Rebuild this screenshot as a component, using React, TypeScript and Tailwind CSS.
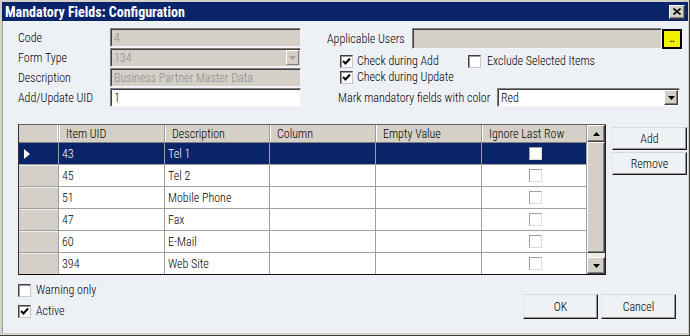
type Cell = { uid: string; desc: string };

const rows: Cell[] = [
  { uid: "43", desc: "Tel 1" },
  { uid: "45", desc: "Tel 2" },
  { uid: "51", desc: "Mobile Phone" },
  { uid: "47", desc: "Fax" },
  { uid: "60", desc: "E-Mail" },
  { uid: "394", desc: "Web Site" },
];

const headers = ["Item UID", "Description", "Column", "Empty Value", "Ignore Last Row"];

function CheckMark() {
  return (
    <svg width="9" height="9" viewBox="0 0 9 9" className="block">
      <path d="M1 4 L3.5 6.5 L8 1.5" fill="none" stroke="#000" strokeWidth="2" />
    </svg>
  );
}

function CheckBox({ checked = false }: { checked?: boolean }) {
  return (
    <span className="flex h-[13px] w-[13px] shrink-0 items-center justify-center border border-t-[#404040] border-l-[#404040] border-b-[#c8c8c8] border-r-[#c8c8c8] bg-white shadow-[inset_1px_1px_0_#9a9a9a]">
      {checked && <CheckMark />}
    </span>
  );
}

function GridCheck() {
  return (
    <span className="block h-[13px] w-[13px] border border-t-[#a0a0a0] border-l-[#a0a0a0] border-b-[#dcdcdc] border-r-[#dcdcdc] bg-white" />
  );
}

function DownArrow({ color = "#000" }: { color?: string }) {
  return (
    <svg width="7" height="4" viewBox="0 0 7 4" className="block">
      <path d="M0 0 H7 L3.5 4 Z" fill={color} />
    </svg>
  );
}

function UpArrow() {
  return (
    <svg width="7" height="4" viewBox="0 0 7 4" className="block">
      <path d="M0 4 H7 L3.5 0 Z" fill="#000" />
    </svg>
  );
}

function ClassicButton({ label, h = "h-[24px]" }: { label: string; h?: string }) {
  return (
    <div
      className={
        "flex w-[75px] items-center justify-center border border-t-[#d8dbdd] border-l-[#e6e8ea] border-b-[#1a1a1a] border-r-[#1a1a1a] bg-[#eef2f5] text-black shadow-[inset_-1px_-1px_0_#9a9a9a] " +
        h
      }
    >
      {label}
    </div>
  );
}

function Sunken({ className, children }: { className: string; children?: React.ReactNode }) {
  return (
    <div
      className={
        "flex items-center border border-t-[#808080] border-l-[#808080] border-b-[#f4f4f4] border-r-[#f4f4f4] shadow-[inset_1px_1px_0_#404040] " +
        className
      }
    >
      {children}
    </div>
  );
}

const raised =
  "border border-t-white border-l-white border-b-[#404040] border-r-[#404040] bg-[#d4d0c8] shadow-[inset_-1px_-1px_0_#808080]";

export default function App() {
  return (
    <div className="flex h-[336px] w-[690px] flex-col bg-[#d4d0c8] px-[2px] pt-[2px] pb-[3px] font-['Roboto_Condensed',sans-serif] text-[12px] font-light text-black shadow-[inset_0_-1px_0_#404040,inset_-1px_0_0_#404040]">
      {/* title bar */}
      <div className="flex h-[19px] shrink-0 items-center justify-between bg-[#0a246a] pl-[3px] pr-[3px]">
        <span className="text-[14px] font-bold leading-none text-white">Mandatory Fields: Configuration</span>
        <div className={"flex h-[14px] w-[16px] items-center justify-center " + raised}>
          <svg width="8" height="7" viewBox="0 0 8 7" className="block">
            <path d="M0.5 0.5 L7.5 6.5 M7.5 0.5 L0.5 6.5" stroke="#000" strokeWidth="1.6" />
          </svg>
        </div>
      </div>

      {/* body */}
      <div className="flex flex-1 flex-col bg-[#edf1f5] pl-[16px] pt-[7px] pr-[12px] shadow-[inset_1px_0_0_#a0a0a0]">
        {/* header form */}
        <div className="flex">
          <div className="flex w-[283px] flex-col gap-[1px]">
            <div className="flex h-[19px] items-center">
              <span className="w-[92px]">Code</span>
              <Sunken className="h-[19px] w-[191px] bg-[#d4d0c8] pl-[3px] text-[#8c8c8c]">4</Sunken>
            </div>
            <div className="flex h-[19px] items-center">
              <span className="w-[92px]">Form Type</span>
              <Sunken className="h-[19px] w-[191px] justify-between bg-[#d4d0c8] pl-[3px] pr-[1px] text-[#8c8c8c]">
                <span>134</span>
                <span className="flex h-[15px] w-[13px] items-center justify-center border border-t-white border-l-white border-b-[#808080] border-r-[#808080] bg-[#d4d0c8]">
                  <DownArrow color="#a0a0a0" />
                </span>
              </Sunken>
            </div>
            <div className="flex h-[19px] items-center">
              <span className="w-[92px]">Description</span>
              <Sunken className="h-[19px] w-[191px] bg-[#d4d0c8] pl-[3px] text-[#8c8c8c]">Business Partner Master Data</Sunken>
            </div>
            <div className="flex h-[19px] items-center">
              <span className="w-[92px]">Add/Update UID</span>
              <Sunken className="h-[19px] w-[191px] bg-white pl-[3px]">1</Sunken>
            </div>
          </div>

          <div className="ml-[26px] flex w-[355px] flex-col">
            <div className="flex h-[21px] items-center">
              <span className="w-[85px]">Applicable Users</span>
              <Sunken className="h-[21px] w-[250px] bg-[#d4d0c8]" />
              <div className="flex h-[20px] w-[20px] items-end justify-center border-2 border-black bg-[#f2f200] pb-[3px] text-[9px] font-bold leading-none">
                ..
              </div>
            </div>
            <div className="mt-[4px] flex h-[16px] items-center pl-[13px]">
              <div className="flex w-[128px] items-center gap-[4px]">
                <CheckBox checked />
                <span>Check during Add</span>
              </div>
              <div className="flex items-center gap-[6px]">
                <CheckBox />
                <span>Exclude Selected Items</span>
              </div>
            </div>
            <div className="flex h-[16px] items-center gap-[4px] pl-[13px]">
              <CheckBox checked />
              <span>Check during Update</span>
            </div>
            <div className="mt-[3px] flex h-[19px] items-center">
              <span className="w-[170px] pl-[11px]">Mark mandatory fields with color</span>
              <Sunken className="h-[19px] w-[183px] justify-between bg-white pl-[3px] pr-[1px]">
                <span>Red</span>
                <span className={"flex h-[15px] w-[14px] items-center justify-center " + raised}>
                  <DownArrow />
                </span>
              </Sunken>
            </div>
          </div>
        </div>

        {/* grid + side buttons */}
        <div className="mt-[17px] flex">
          <div className="flex h-[151px] w-[588px] border border-t-[#606060] border-l-[#303030] border-b-[#101010] border-r-[#202020] bg-white">
            <div className="flex w-[568px] flex-col">
              <div className="flex h-[18px] shrink-0 border-b border-[#808080] bg-[#d4d0c8]">
                <div className="w-[40px] border-r border-[#b8b8b8] shadow-[inset_-1px_0_0_#ffffff]" />
                {headers.map((h, i) => (
                  <div
                    key={h}
                    className={
                      "flex items-center border-r border-[#9a9a9a] pl-[7px] shadow-[inset_1px_0_0_#ffffff] " +
                      (i === 1 || i === 4 ? "w-[105px]" : "w-[106px]")
                    }
                  >
                    {h}
                  </div>
                ))}
              </div>
              {rows.map((r, idx) => {
                const sel = idx === 0;
                const last = idx === rows.length - 1;
                return (
                  <div
                    key={r.uid}
                    className={
                      "flex shrink-0 " +
                      (last ? "h-[21px] " : "h-[22px] border-b border-[#a0a0a0] ") +
                      (sel ? "bg-[#0a246a] text-white" : "bg-white")
                    }
                  >
                    <div
                      className={
                        "flex w-[40px] items-center border-r border-[#a0a0a0] pl-[5px] " +
                        (sel ? "bg-[#0a246a]" : "bg-[#d4d0c8] shadow-[inset_0_1px_0_#eeeeee]")
                      }
                    >
                      {sel && (
                        <svg width="6" height="10" viewBox="0 0 6 10" className="block">
                          <path d="M0 0 L6 5 L0 10 Z" fill="#fff" />
                        </svg>
                      )}
                    </div>
                    <div className="flex w-[106px] items-center border-r border-[#a0a0a0] pl-[3px]">{r.uid}</div>
                    <div className="flex w-[105px] items-center border-r border-[#a0a0a0] pl-[3px]">{r.desc}</div>
                    <div className="w-[106px] border-r border-[#a0a0a0]" />
                    <div className="w-[106px] border-r border-[#a0a0a0]" />
                    <div className="flex w-[105px] items-center justify-center border-r border-[#a0a0a0] pl-[2px]">
                      <GridCheck />
                    </div>
                  </div>
                );
              })}
            </div>

            {/* scrollbar */}
            <div className="flex w-[18px] flex-col bg-[#e6e4df]">
              <div className={"flex h-[17px] items-center justify-center " + raised}>
                <UpArrow />
              </div>
              <div className={"flex-1 " + raised} />
              <div className="h-[4px] bg-[#eceae6]" />
              <div className={"flex h-[17px] items-center justify-center " + raised}>
                <DownArrow />
              </div>
            </div>
          </div>

          <div className="ml-[6px] flex flex-col gap-[2px] pt-[3px]">
            <ClassicButton label="Add" h="h-[23px]" />
            <ClassicButton label="Remove" h="h-[23px]" />
          </div>
        </div>

        {/* footer */}
        <div className="flex items-start">
          <div className="mt-[7px] flex flex-col gap-[5px]">
            <div className="flex h-[16px] items-center gap-[5px]">
              <CheckBox />
              <span>Warning only</span>
            </div>
            <div className="flex h-[16px] items-center gap-[5px]">
              <CheckBox checked />
              <span>Active</span>
            </div>
          </div>
          <div className="ml-auto mt-[19px] flex gap-[3px]">
            <ClassicButton label="OK" h="h-[25px]" />
            <ClassicButton label="Cancel" h="h-[25px]" />
          </div>
        </div>
      </div>
    </div>
  );
}
